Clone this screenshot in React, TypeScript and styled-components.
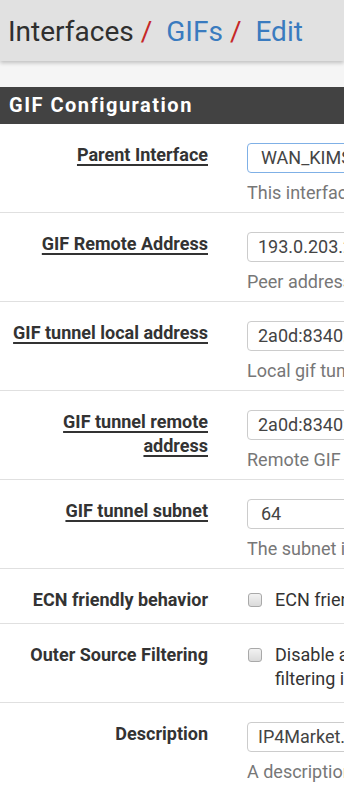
import styled, { createGlobalStyle } from 'styled-components';

const GlobalStyle = createGlobalStyle`
  html, body {
    margin: 0;
    padding: 0;
    background: #f5f5f5;
    overflow: hidden;
  }
  body {
    font-family: Roboto, 'Liberation Sans', sans-serif;
  }
`;

interface Field {
  label: string;
  underline?: boolean;
  kind: 'select' | 'input' | 'checkbox' | 'focusSelect';
  value: string;
  help?: string;
}

const fields: Field[] = [
  {
    label: 'Parent Interface',
    underline: true,
    kind: 'focusSelect',
    value: 'WAN_KIMSUFI',
    help: 'This interface serves as the local address to be used for the GIF tunnel.',
  },
  {
    label: 'GIF Remote Address',
    underline: true,
    kind: 'input',
    value: '193.0.203.203',
    help: 'Peer address where encapsulated gif packets will be sent.',
  },
  {
    label: 'GIF tunnel local address',
    underline: true,
    kind: 'input',
    value: '2a0d:8340:1::2',
    help: 'Local gif tunnel endpoint.',
  },
  {
    label: 'GIF tunnel remote address',
    underline: true,
    kind: 'input',
    value: '2a0d:8340:1::1',
    help: 'Remote GIF address endpoint.',
  },
  {
    label: 'GIF tunnel subnet',
    underline: true,
    kind: 'select',
    value: '64',
    help: 'The subnet is used for determining the network that is tunnelled.',
  },
  {
    label: 'ECN friendly behavior',
    kind: 'checkbox',
    value: 'ECN friendly behavior violates RFC2893.',
  },
  {
    label: 'Outer Source Filtering',
    kind: 'checkbox',
    value:
      'Disable automatic filtering of outer GIF source which ensures a match with the configured remote peer. When disabled, martian and inbound\nfiltering is not performed which allows asymmetric routing of the outer traffic.',
  },
  {
    label: 'Description',
    kind: 'input',
    value: 'IP4Market.ru IPv6 tunnel',
    help: 'A description may be entered here for administrative reference (not parsed).',
  },
];

export default function App() {
  return (
    <Page>
      <GlobalStyle />
      <Header>
        <Crumb>Interfaces</Crumb>
        <Sep>/</Sep>
        <CrumbLink>GIFs</CrumbLink>
        <Sep>/</Sep>
        <CrumbLink>Edit</CrumbLink>
      </Header>
      <Panel>
        <PanelHeading>GIF Configuration</PanelHeading>
        <PanelBody>
          {fields.map((f) => (
            <Row key={f.label} $check={f.kind === 'checkbox'}>
              <LabelCol>
                <LabelText $underline={!!f.underline}>{f.label}</LabelText>
              </LabelCol>
              <FieldCol>
                {f.kind === 'checkbox' ? (
                  <CheckLine>
                    <CheckBox />
                    <CheckText>{f.value}</CheckText>
                  </CheckLine>
                ) : (
                  <>
                    <Control
                      $focus={f.kind === 'focusSelect'}
                      $select={f.kind !== 'input'}
                    >
                      {f.value}
                    </Control>
                    {f.help && <Help>{f.help}</Help>}
                  </>
                )}
              </FieldCol>
            </Row>
          ))}
        </PanelBody>
      </Panel>
    </Page>
  );
}

const Page = styled.div`
  width: 344px;
  height: 787px;
  overflow: hidden;
  background: #f5f5f5;
`;

const Header = styled.div`
  height: 58px;
  padding: 3px 0 0 8px;
  background: #e1e1e1;
  box-shadow: 0 2px 4px rgba(0, 0, 0, 0.22);
  display: flex;
  align-items: flex-start;
  white-space: nowrap;
  font-size: 28px;
  line-height: 58px;
  position: relative;
  z-index: 1;
`;

const Crumb = styled.span`
  color: #2f2f2f;
`;

const CrumbLink = styled.span`
  color: #3a7bbf;
`;

const Sep = styled.span`
  color: #c62828;
  margin: 0 14px 0 7px;
`;

const Panel = styled.div`
  margin-top: 26px;
  background: #ffffff;
`;

const PanelHeading = styled.div`
  height: 37px;
  line-height: 37px;
  padding-left: 9px;
  background: #424242;
  color: #ffffff;
  font-size: 20px;
  font-weight: 700;
  letter-spacing: 1.5px;
  white-space: nowrap;
`;

const PanelBody = styled.div`
  background: #ffffff;
`;

const Row = styled.div<{ $check: boolean }>`
  display: grid;
  grid-template-columns: 208px 1fr;
  column-gap: 39px;
  padding: 19px 0 ${({ $check }) => ($check ? '6px' : '7px')};
  border-bottom: 1px solid #e0e0e0;
`;

const LabelCol = styled.div`
  padding-left: 8px;
  text-align: right;
  font-size: 18px;
  font-weight: 700;
  line-height: 24px;
  color: #333333;
`;

const LabelText = styled.span<{ $underline: boolean }>`
  text-decoration: ${({ $underline }) => ($underline ? 'underline' : 'none')};
  text-decoration-thickness: 2px;
  text-underline-offset: 3px;
`;

const FieldCol = styled.div`
  min-width: 0;
  white-space: nowrap;
`;

const Control = styled.div<{ $focus: boolean; $select: boolean }>`
  box-sizing: border-box;
  width: 520px;
  height: 30px;
  line-height: 28px;
  padding-left: ${({ $select }) => ($select ? '13px' : '10px')};
  border: 1px solid ${({ $focus }) => ($focus ? '#7fb0e6' : '#cccccc')};
  border-radius: 4px;
  font-size: 18px;
  color: #444444;
  background: #ffffff;
`;

const Help = styled.div`
  margin-top: 8px;
  font-size: 18px;
  line-height: 24px;
  color: #777777;
`;

const CheckLine = styled.div`
  display: flex;
  align-items: flex-start;
  gap: 13px;
  margin-bottom: 5px;
`;

const CheckBox = styled.span`
  flex: none;
  box-sizing: border-box;
  width: 14px;
  height: 14px;
  margin: 5px 0 0 1px;
  border: 1px solid #a9a9a9;
  border-radius: 3px;
  background: linear-gradient(#f2f2f2, #dadada);
`;

const CheckText = styled.span`
  font-size: 18px;
  line-height: 24px;
  color: #333333;
  white-space: pre;
`;
